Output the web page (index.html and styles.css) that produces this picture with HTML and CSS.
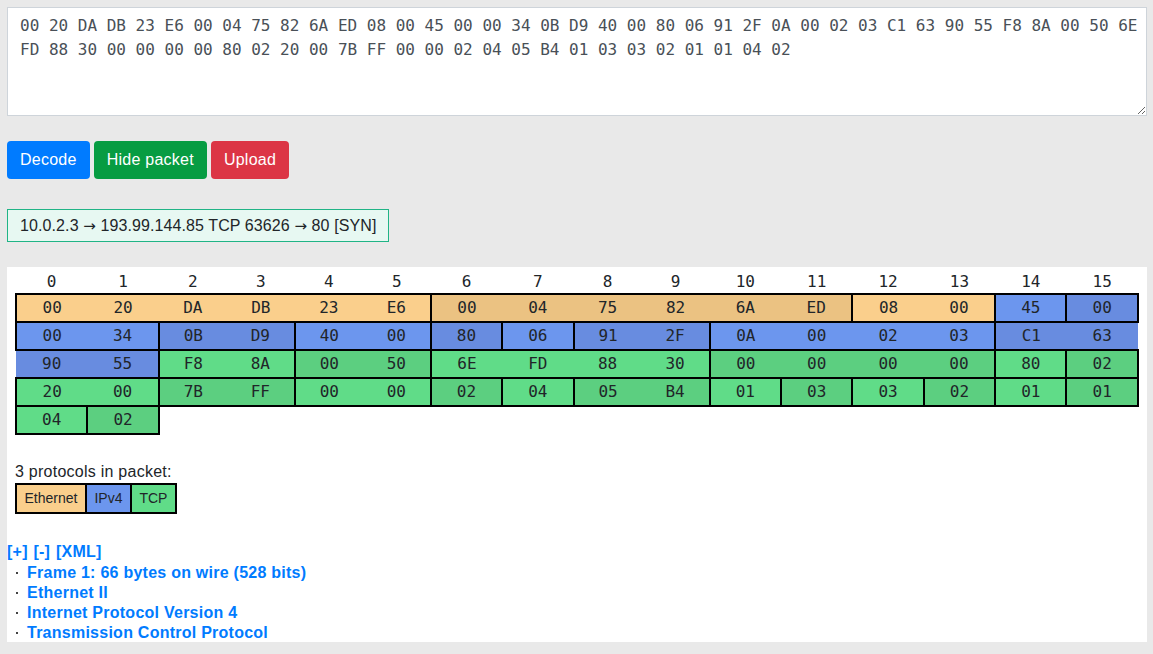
FILE: index.html
```html
<!DOCTYPE html>
<html lang="en">
<head>
<meta charset="utf-8">
<title>Packet decoder</title>
<link rel="stylesheet" href="styles.css">
</head>
<body>
<textarea class="hex-input" spellcheck="false">00 20 DA DB 23 E6 00 04 75 82 6A ED 08 00 45 00 00 34 0B D9 40 00 80 06 91 2F 0A 00 02 03 C1 63 90 55 F8 8A 00 50 6E FD 88 30 00 00 00 00 80 02 20 00 7B FF 00 00 02 04 05 B4 01 03 03 02 01 01 04 02</textarea>

<div class="actions">
  <button class="btn btn-blue">Decode</button>
  <button class="btn btn-green">Hide packet</button>
  <button class="btn btn-red">Upload</button>
</div>

<div class="summary">10.0.2.3 <span class="arrow">→</span> 193.99.144.85 TCP 63626 <span class="arrow">→</span> 80 [SYN]</div>

<div class="panel">
  <div class="panel-inner">
    <table class="hex">
      <thead>
        <tr><th>0</th><th>1</th><th>2</th><th>3</th><th>4</th><th>5</th><th>6</th><th>7</th><th>8</th><th>9</th><th>10</th><th>11</th><th>12</th><th>13</th><th>14</th><th>15</th></tr>
      </thead>
      <tbody>
        <tr>
          <td class="e1 bl">00</td><td class="e1">20</td><td class="e1">DA</td><td class="e1">DB</td><td class="e1">23</td><td class="e1 br">E6</td>
          <td class="e2 bl">00</td><td class="e2">04</td><td class="e2">75</td><td class="e2">82</td><td class="e2">6A</td><td class="e2 br">ED</td>
          <td class="e1 bl">08</td><td class="e1 br">00</td>
          <td class="i1 bl br">45</td><td class="i2 bl br">00</td>
        </tr>
        <tr>
          <td class="i1 bl">00</td><td class="i1 br">34</td>
          <td class="i2 bl">0B</td><td class="i2 br">D9</td>
          <td class="i1 bl">40</td><td class="i1 br">00</td>
          <td class="i2 bl br">80</td>
          <td class="i1 bl br">06</td>
          <td class="i2 bl">91</td><td class="i2 br">2F</td>
          <td class="i1 bl">0A</td><td class="i1">00</td><td class="i1">02</td><td class="i1 br">03</td>
          <td class="i2 bl">C1</td><td class="i2">63</td>
        </tr>
        <tr>
          <td class="i2">90</td><td class="i2 br">55</td>
          <td class="t1 bl">F8</td><td class="t1 br">8A</td>
          <td class="t2 bl">00</td><td class="t2 br">50</td>
          <td class="t1 bl">6E</td><td class="t1">FD</td><td class="t1">88</td><td class="t1 br">30</td>
          <td class="t2 bl">00</td><td class="t2">00</td><td class="t2">00</td><td class="t2 br">00</td>
          <td class="t1 bl br">80</td>
          <td class="t2 bl br">02</td>
        </tr>
        <tr>
          <td class="t1 bl">20</td><td class="t1 br">00</td>
          <td class="t2 bl">7B</td><td class="t2 br">FF</td>
          <td class="t1 bl">00</td><td class="t1 br">00</td>
          <td class="t2 bl br">02</td>
          <td class="t1 bl br">04</td>
          <td class="t2 bl">05</td><td class="t2 br">B4</td>
          <td class="t1 bl br">01</td>
          <td class="t2 bl br">03</td>
          <td class="t1 bl br">03</td>
          <td class="t2 bl br">02</td>
          <td class="t1 bl br">01</td>
          <td class="t2 bl br">01</td>
        </tr>
        <tr>
          <td class="t1 bl br">04</td>
          <td class="t2 bl br">02</td>
          <td class="empty"></td><td class="empty"></td><td class="empty"></td><td class="empty"></td><td class="empty"></td><td class="empty"></td><td class="empty"></td><td class="empty"></td><td class="empty"></td><td class="empty"></td><td class="empty"></td><td class="empty"></td><td class="empty"></td><td class="empty"></td>
        </tr>
      </tbody>
    </table>

    <p class="count">3 protocols in packet:</p>
    <table class="legend">
      <tr><td class="e1">Ethernet</td><td class="i1">IPv4</td><td class="t1">TCP</td></tr>
    </table>
  </div>

  <div class="tree">
    <div class="tree-actions"><a href="#">[+]</a> <a href="#">[-]</a> <a href="#">[XML]</a></div>
    <ul class="tree-list">
      <li><a href="#">Frame 1: 66 bytes on wire (528 bits)</a></li>
      <li><a href="#">Ethernet II</a></li>
      <li><a href="#">Internet Protocol Version 4</a></li>
      <li><a href="#">Transmission Control Protocol</a></li>
    </ul>
  </div>
</div>
</body>
</html>
```

FILE: styles.css
```css
html, body {
  margin: 0;
}

body {
  padding: 7px 6px 0 7px;
  background: #e9e9e9;
  font-family: "Liberation Sans", Arial, sans-serif;
  font-size: 16px;
  color: #212529;
}

.hex-input {
  display: block;
  box-sizing: border-box;
  width: 100%;
  height: 109px;
  margin: 0;
  padding: 6px 5px 6px 12px;
  border: 1px solid #ced4da;
  border-radius: 0;
  background: #fff;
  color: #495057;
  font-family: "DejaVu Sans Mono", monospace;
  font-size: 16px;
  line-height: 24px;
}

.actions {
  display: flex;
  gap: 4px;
  margin-top: 25px;
}

.btn {
  padding: 6px 12px;
  border: 1px solid transparent;
  border-radius: 4px;
  font-family: "Liberation Sans", Arial, sans-serif;
  font-size: 16px;
  line-height: 24px;
  letter-spacing: 0.25px;
  color: #fff;
}

.btn-blue { background: #007bff; }
.btn-green { background: #079c42; }
.btn-red { background: #dc3545; }

.summary {
  width: fit-content;
  margin-top: 30px;
  padding: 6px 12px 5px 12px;
  border: 1px solid #20b486;
  background: #e7f8f2;
  line-height: 19px;
  letter-spacing: 0.1px;
}

.arrow {
  font-family: "DejaVu Sans", sans-serif;
  font-size: 15px;
}

.panel {
  margin-top: 25px;
  background: #fff;
}

.panel-inner {
  padding: 5px 8px 0 8px;
}

.hex {
  width: 100%;
  border-collapse: collapse;
  font-family: "DejaVu Sans Mono", monospace;
  font-size: 16px;
  color: #212529;
}

.hex th {
  padding: 0;
  height: 21px;
  line-height: 19px;
  vertical-align: top;
  font-weight: normal;
  text-align: center;
}

.hex td {
  padding: 0;
  height: 26px;
  line-height: 26px;
  text-align: center;
  border-top: 2px solid #000;
  border-bottom: 2px solid #000;
}

.hex td.empty {
  border: none;
}

.hex td.bl { border-left: 2px solid #000; }
.hex td.br { border-right: 2px solid #000; }

.e1 { background: #facf8c; }
.e2 { background: #ebc282; }
.i1 { background: #6c96ee; }
.i2 { background: #688ce0; }
.t1 { background: #60dc88; }
.t2 { background: #5ccf80; }

.count {
  margin: 27px 0 2px 0;
  line-height: 19px;
  letter-spacing: 0.25px;
}

.legend {
  border-collapse: collapse;
  font-size: 14px;
  line-height: 17px;
}

.legend td {
  padding: 5px 7.5px;
  border: 2px solid #000;
}

.tree {
  margin-top: 28px;
  font-weight: bold;
  font-size: 16px;
  line-height: 20px;
  letter-spacing: 0.25px;
}

.tree a {
  color: #007bff;
  text-decoration: none;
}

.tree-actions {
  margin-bottom: 1px;
  word-spacing: 1px;
}

.tree-list {
  margin: 0 0 -1px 0;
  padding: 0;
  list-style: none;
}

.tree-list li {
  display: flex;
  align-items: center;
  padding-left: 9px;
}

.tree-list li::before {
  content: "";
  width: 2px;
  height: 2px;
  margin-right: 9px;
  background: #444;
}
```
